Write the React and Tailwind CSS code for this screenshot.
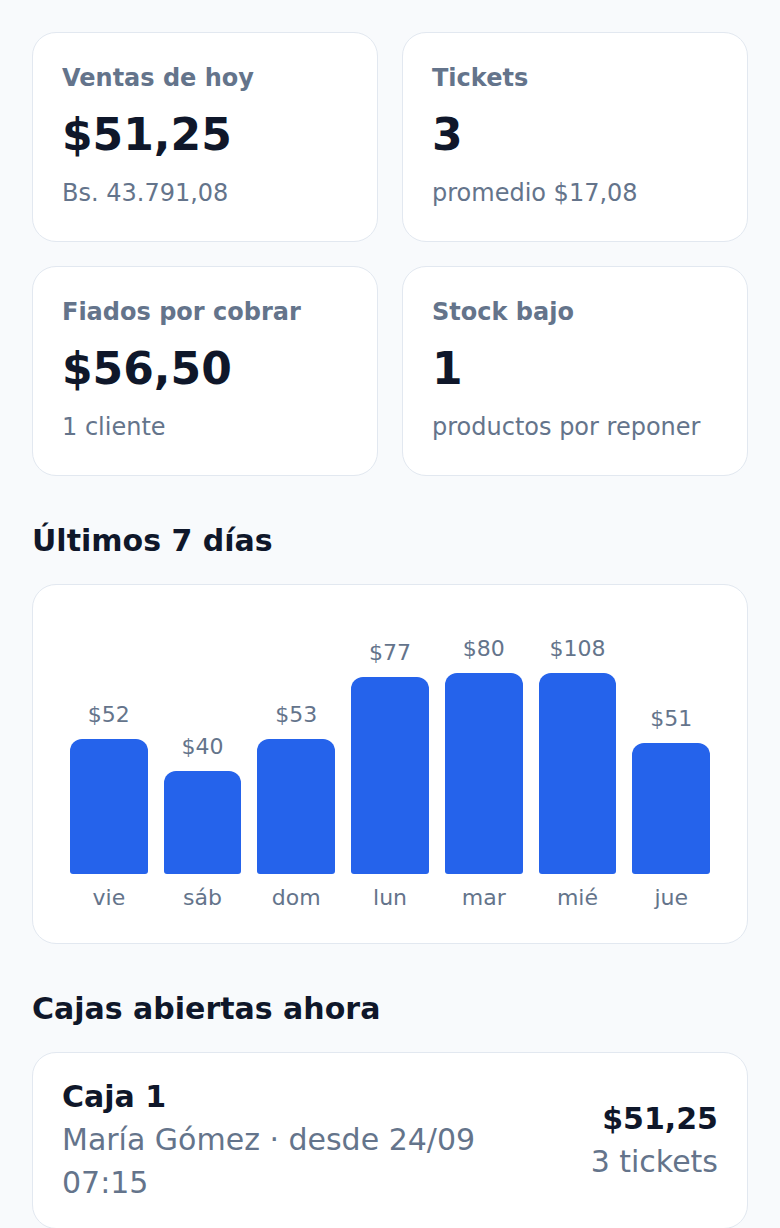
const STATS = [
  { label: "Ventas de hoy", value: "$51,25", sub: "Bs. 43.791,08" },
  { label: "Tickets", value: "3", sub: "promedio $17,08" },
  { label: "Fiados por cobrar", value: "$56,50", sub: "1 cliente" },
  { label: "Stock bajo", value: "1", sub: "productos por reponer" },
];

// alturas en px tal como se ven en la gráfica
const DAYS = [
  { day: "vie", total: "$52", h: 135 },
  { day: "sáb", total: "$40", h: 103 },
  { day: "dom", total: "$53", h: 135 },
  { day: "lun", total: "$77", h: 197 },
  { day: "mar", total: "$80", h: 201 },
  { day: "mié", total: "$108", h: 201 },
  { day: "jue", total: "$51", h: 131 },
];

export default function App() {
  return (
    <div className="min-h-screen bg-[#f8fafc] px-8 pt-8 pb-10 font-['DejaVu_Sans',sans-serif] text-[#0f172a]">
      <div className="grid grid-cols-2 gap-6">
        {STATS.map((s) => (
          <StatCard key={s.label} {...s} />
        ))}
      </div>

      <h2 className="mt-[44px] text-[30px] font-bold leading-[42px]">Últimos 7 días</h2>
      <div className="mt-[22px] rounded-3xl border border-[#e2e8f0] bg-white px-[37px] pt-[30px] pb-[29px]">
        <div className="flex h-[259px] items-end gap-4">
          {DAYS.map((d) => (
            <div key={d.day} className="flex flex-1 flex-col items-center">
              <span className="mb-[10px] text-[22px] leading-[28px] text-[#64748b]">{d.total}</span>
              <div className="w-full rounded-t-xl rounded-b-[3px] bg-[#2563eb]" style={{ height: d.h }} />
            </div>
          ))}
        </div>
        <div className="mt-[7px] flex gap-4">
          {DAYS.map((d) => (
            <span key={d.day} className="flex-1 text-center text-[22px] leading-[33px] text-[#64748b]">
              {d.day}
            </span>
          ))}
        </div>
      </div>

      <h2 className="mt-[44px] text-[30px] font-bold leading-[42px]">Cajas abiertas ahora</h2>
      <div className="mt-[22px] flex items-center justify-between gap-6 rounded-3xl border border-[#e2e8f0] bg-white px-[29px] pt-[22px] pb-6">
        <div className="max-w-[440px]">
          <div className="text-[30px] font-bold leading-[43px]">Caja 1</div>
          <div className="text-[30px] leading-[43px] text-[#64748b]">María Gómez · desde 24/09 07:15</div>
        </div>
        <div className="text-right">
          <div className="text-[30px] font-bold leading-[43px]">$51,25</div>
          <div className="text-[30px] leading-[43px] text-[#64748b]">3 tickets</div>
        </div>
      </div>
    </div>
  );
}

function StatCard({ label, value, sub }) {
  return (
    <div className="rounded-3xl border border-[#e2e8f0] bg-white px-[29px] pt-[29px] pb-[31px]">
      <div className="text-[24px] font-bold leading-[33px] text-[#64748b]">{label}</div>
      <div className="mt-[13px] text-[44px] font-bold leading-[53px]">{value}</div>
      <div className="mt-[16px] text-[24px] leading-[33px] text-[#64748b]">{sub}</div>
    </div>
  );
}
